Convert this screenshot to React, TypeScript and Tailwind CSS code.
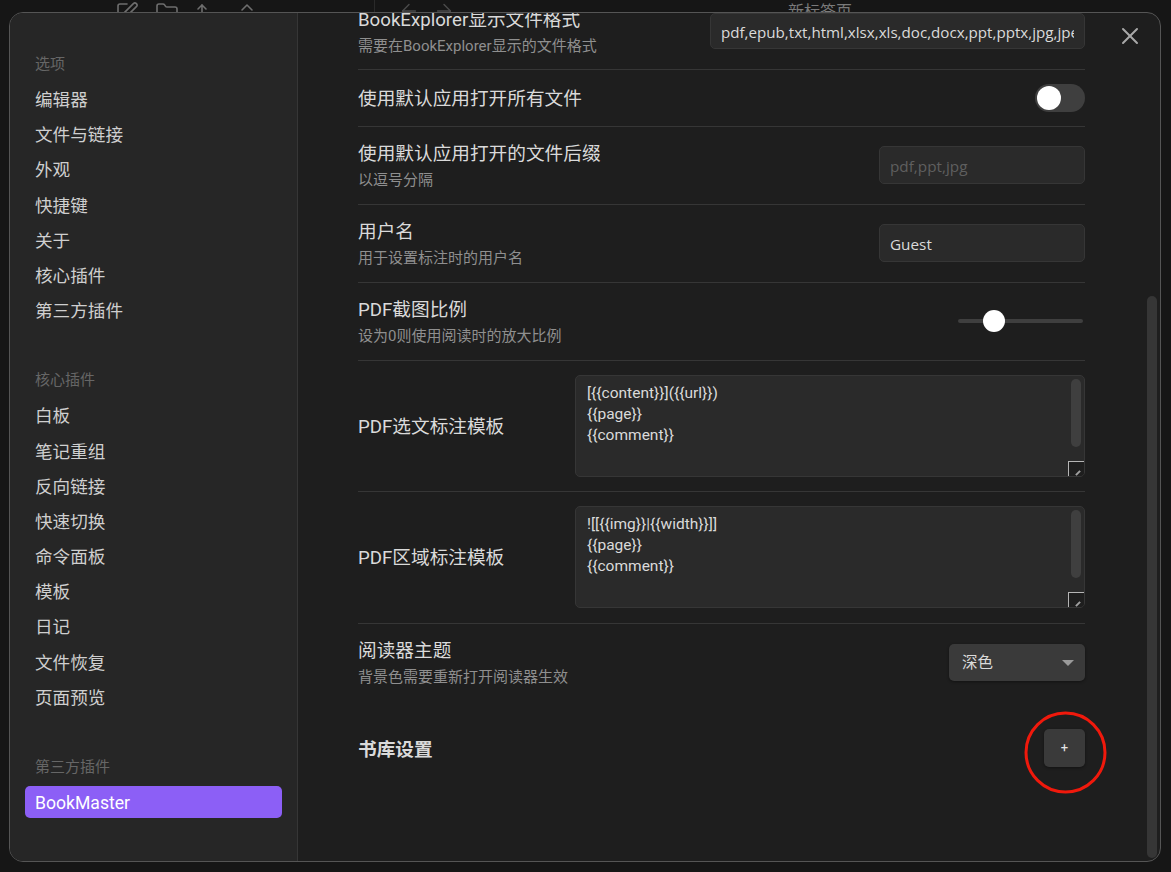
import React from 'react';
import { ArrowLeft, ArrowRight, ArrowUpNarrowWide, ChevronsUpDown, Folder, SquarePen, X } from 'lucide-react';

const FONT = 'Roboto, "Noto Sans CJK SC", sans-serif';

const optionItems = ['编辑器', '文件与链接', '外观', '快捷键', '关于', '核心插件', '第三方插件'];
const coreItems = ['白板', '笔记重组', '反向链接', '快速切换', '命令面板', '模板', '日记', '文件恢复', '页面预览'];

function NavGroup({ title, items }: { title: string; items: string[] }) {
  return (
    <div className="mb-[34px]">
      <div className="h-[36px] pl-[10px] text-[15px] leading-[35px] text-[#666666]">{title}</div>
      {items.map((item) => (
        <div key={item} className="h-[35.2px] pl-[10px] text-[17.6px] leading-[35.2px] text-[#cfcfcf]">
          {item}
        </div>
      ))}
    </div>
  );
}

function Info({ title, desc, className }: { title: string; desc?: string; className?: string }) {
  return (
    <div className={`flex-1 ${desc ? '' : 'pt-[2px]'} ${className ?? ''}`}>
      <div className="text-[18.67px] leading-[28px] text-[#dadada]">{title}</div>
      {desc && <div className="mt-[1px] text-[15px] leading-[22px] text-[#8f8f8f]">{desc}</div>}
    </div>
  );
}

function Row({ h, children }: { h: string; children: React.ReactNode }) {
  return <div className={`flex items-center border-b border-[#363636] ${h}`}>{children}</div>;
}

function TemplateBox({ lines, className }: { lines: string[]; className: string }) {
  return (
    <div className={`relative h-[102px] w-[510px] overflow-hidden rounded-[5px] border border-[#363636] bg-[#2a2a2a] px-[11px] text-[15.5px] leading-[21px] text-[#dadada] ${className}`}>
      {lines.map((line) => (
        <div key={line}>{line}</div>
      ))}
      <div className="absolute right-[3px] top-[3px] h-[68px] w-[10px] rounded-[5px] bg-[#3f3f3f]" />
      <div className="absolute bottom-0 right-0 h-[15px] w-[16px] border-l border-t border-[#b5b5b5] bg-[#1e1e1e]">
        <div className="absolute bottom-[2px] right-[3px] h-[2px] w-[6px] -rotate-45 bg-[#a0a0a0]" />
      </div>
    </div>
  );
}

export default function App() {
  return (
    <div className="relative h-[872px] w-[1171px] overflow-hidden bg-[#161616]" style={{ fontFamily: FONT }}>
      {/* workspace behind the dialog */}
      <div className="flex h-[30px] items-start text-[#6e6e6e]">
        <div className="ml-[115px] mt-[1px] flex gap-[16px]">
          <SquarePen size={24} strokeWidth={1.6} />
          <Folder size={24} strokeWidth={1.6} />
          <ArrowUpNarrowWide size={24} strokeWidth={1.6} />
          <ChevronsUpDown size={24} strokeWidth={1.6} />
        </div>
        <div className="ml-[139px] flex gap-[13px] text-[#4a4a4a]">
          <ArrowLeft size={22} strokeWidth={1.6} />
          <ArrowRight size={22} strokeWidth={1.6} />
        </div>
        <div className="ml-[333px] text-[16px] leading-[24px] text-[#7a7a7a]">新标签页</div>
      </div>
      <div className="absolute left-[374px] top-0 h-[12px] w-px bg-[#2a2a2a]" />

      <div className="absolute left-[9px] top-[12px] flex h-[850px] w-[1152px] overflow-hidden rounded-[14px] border border-[#555555] bg-[#1e1e1e]">
        <aside className="w-[288px] shrink-0 border-r border-[#363636] bg-[#262626] pl-[15px] pr-[15px] pt-[34px]">
          <NavGroup title="选项" items={optionItems} />
          <NavGroup title="核心插件" items={coreItems} />
          <div className="h-[35px] pl-[10px] text-[15px] leading-[35px] text-[#666666]">第三方插件</div>
          <div className="mt-[1px] h-[32px] w-[257px] rounded-[5px] bg-[#8c5ff6] pl-[10px] text-[17.6px] leading-[35px] text-white">
            BookMaster
          </div>
        </aside>

        <main className="relative flex-1 overflow-hidden pl-[60px]">
          <div className="w-[727px]">
            <Row h="h-[57px]">
              <Info className="mb-[20px]" title="BookExplorer显示文件格式" desc="需要在BookExplorer显示的文件格式" />
              <div className="mb-[21px] h-[36px] w-[375px] overflow-hidden whitespace-nowrap rounded-[5px] border border-[#363636] bg-[#2a2a2a] pl-[10px] pr-[10px] font-['Open_Sans'] text-[15.15px] leading-[36px] text-[#dadada]">
                <div className="overflow-hidden">pdf,epub,txt,html,xlsx,xls,doc,docx,ppt,pptx,jpg,jpeg</div>
              </div>
            </Row>
            <Row h="h-[57px]">
              <Info title="使用默认应用打开所有文件" />
              <div className="flex h-[28px] w-[50px] items-center rounded-full bg-[#3f3f3f] pl-[2px]">
                <div className="h-[24px] w-[24px] rounded-full bg-white" />
              </div>
            </Row>
            <Row h="h-[78px]">
              <Info title="使用默认应用打开的文件后缀" desc="以逗号分隔" />
              <div className="mb-[2px] h-[38px] w-[206px] rounded-[5px] border border-[#363636] bg-[#2a2a2a] pl-[10px] font-['Open_Sans'] text-[15.3px] leading-[38px] text-[#5f5f5f]">
                pdf,ppt,jpg
              </div>
            </Row>
            <Row h="h-[78px]">
              <Info title="用户名" desc="用于设置标注时的用户名" />
              <div className="mb-[2px] h-[38px] w-[206px] rounded-[5px] border border-[#363636] bg-[#2a2a2a] pl-[10px] font-['Open_Sans'] text-[15.3px] leading-[38px] text-[#dadada]">
                Guest
              </div>
            </Row>
            <Row h="h-[78px]">
              <Info title="PDF截图比例" desc="设为0则使用阅读时的放大比例" />
              <div className="relative mb-[2px] mr-[2px] h-[4px] w-[125px] rounded-full bg-[#3f3f3f]">
                <div className="absolute left-[25px] top-[-9px] h-[22px] w-[22px] rounded-full bg-white" />
              </div>
            </Row>
            <Row h="h-[131px]">
              <Info title="PDF选文标注模板" />
              <TemplateBox className="pt-[7px]" lines={['[{{content}}]({{url}})', '{{page}}', '{{comment}}']} />
            </Row>
            <Row h="h-[132px]">
              <Info className="mb-[1px]" title="PDF区域标注模板" />
              <TemplateBox className="mb-[1px] pt-[7px]" lines={['![[{{img}}|{{width}}]]', '{{page}}', '{{comment}}']} />
            </Row>
            <div className="flex h-[78px] items-center">
              <Info className="mb-[1px]" title="阅读器主题" desc="背景色需要重新打开阅读器生效" />
              <div className="relative mb-[2px] h-[37px] w-[136px] rounded-[5px] bg-[#3a3a3a] pl-[13px] text-[15.5px] leading-[39px] text-[#dadada] shadow-[0_1px_3px_rgba(0,0,0,0.4)]">
                深色
                <div className="absolute right-[11px] top-[16px] h-0 w-0 border-x-[6px] border-t-[6px] border-x-transparent border-t-[#9a9a9a]" />
              </div>
            </div>
            <div className="flex h-[93px] items-center">
              <div className="flex-1 pt-[2px] text-[18.67px] font-bold leading-[26px] text-[#dadada]">书库设置</div>
              <div className="mt-[-2px] flex h-[38px] w-[41px] items-center justify-center rounded-[5px] bg-[#3a3a3a] text-[13px] text-[#e6e6e6] shadow-[0_1px_3px_rgba(0,0,0,0.4)]">
                +
              </div>
            </div>
          </div>

          <button className="absolute left-[818px] top-[9px] text-[#a8a8a8]">
            <X size={28} strokeWidth={1.7} />
          </button>
          <div className="absolute bottom-[3px] right-[3px] h-[562px] w-[10px] rounded-[5px] bg-[#363636]" />
        </main>
      </div>

      {/* red annotation ring */}
      <svg className="absolute left-[1020px] top-[707px]" width="92" height="92" viewBox="0 0 92 92">
        <circle cx="45.5" cy="45.5" r="39.5" fill="none" stroke="#f0190c" strokeWidth="3" />
      </svg>
    </div>
  );
}
